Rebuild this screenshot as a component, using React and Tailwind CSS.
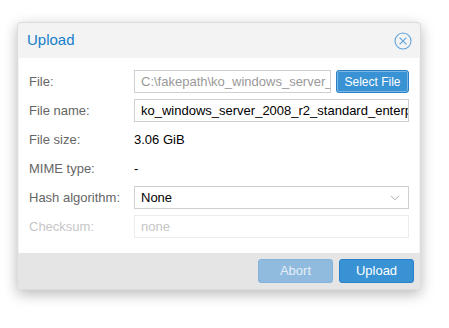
import React from 'react'

const font = { fontFamily: '"Liberation Sans", Arial, sans-serif' }

const Row = ({ label, disabled, children }) => (
  <div className="flex items-center h-[23px]">
    <div className={`w-[105px] shrink-0 text-[13px] ${disabled ? 'text-[#c6c6c6]' : 'text-[#666]'}`}>
      {label}
    </div>
    <div className="flex-1 flex items-center min-w-0">{children}</div>
  </div>
)

const CloseIcon = () => (
  <svg width="18" height="18" viewBox="0 0 18 18" fill="none" stroke="#5fa2dd" strokeWidth="1.1">
    <circle cx="9" cy="9" r="8" />
    <path d="M5.6 5.6 L12.4 12.4 M12.4 5.6 L5.6 12.4" />
  </svg>
)

const Chevron = () => (
  <svg width="10" height="6" viewBox="0 0 10 6" fill="none" stroke="#aaa" strokeWidth="1">
    <path d="M1 0.8 L5 4.8 L9 0.8" />
  </svg>
)

export default function App() {
  return (
    <div className="w-[449px] h-[328px] bg-white pt-[22px] pl-[17px]" style={font}>
      <div className="w-[404px] h-[268px] flex flex-col bg-[#f3f3f3] border border-[#dcdcdc] rounded-[4px] shadow-[0_4px_14px_rgba(0,0,0,0.28)] overflow-hidden">
        {/* Header */}
        <div className="h-[35px] shrink-0 flex items-center justify-between pl-[9px] pr-[8px]">
          <span className="text-[15px] text-[#157fcc]">Upload</span>
          <CloseIcon />
        </div>

        {/* Body */}
        <div className="flex-1 mx-[1px] bg-white pt-[12px] pl-[10px] pr-[10px] flex flex-col gap-[6px]">
          <Row label="File:">
            <div className="flex-1 h-[23px] border border-[#cfcfcf] px-[6px] flex items-center overflow-hidden whitespace-nowrap text-[13px] text-[#999]">
              C:\fakepath\ko_windows_server_
            </div>
            <button className="ml-[5px] w-[73px] h-[23px] shrink-0 bg-[#3892d4] border border-[#2a80c8] rounded-[3px] text-white text-[12px] shadow-[inset_0_0_0_1px_rgba(255,255,255,0.35)]">
              Select File
            </button>
          </Row>
          <Row label="File name:">
            <div className="flex-1 h-[23px] border border-[#cfcfcf] px-[6px] flex items-center overflow-hidden whitespace-nowrap text-[13px] text-black">
              ko_windows_server_2008_r2_standard_enterp
            </div>
          </Row>
          <Row label="File size:">
            <span className="text-[13px] text-black">3.06 GiB</span>
          </Row>
          <Row label="MIME type:">
            <span className="text-[13px] text-black">-</span>
          </Row>
          <Row label="Hash algorithm:">
            <div className="flex-1 h-[23px] border border-[#cfcfcf] pl-[6px] pr-[8px] flex items-center justify-between text-[13px] text-black">
              <span>None</span>
              <Chevron />
            </div>
          </Row>
          <Row label="Checksum:" disabled>
            <div className="flex-1 h-[23px] border border-[#ececec] px-[6px] flex items-center text-[13px] text-[#c6c6c6]">
              none
            </div>
          </Row>
        </div>

        {/* Footer */}
        <div className="h-[36px] shrink-0 bg-[#e5e5e5] flex items-center justify-end gap-[6px] pr-[6px]">
          <button className="w-[75px] h-[24px] bg-[#90bbdf] border border-[#83b3dc] rounded-[3px] text-[13px] text-[#e4eef8]">
            Abort
          </button>
          <button className="w-[75px] h-[24px] bg-[#3892d4] border border-[#2a80c8] rounded-[3px] text-[13px] text-white">
            Upload
          </button>
        </div>
      </div>
    </div>
  )
}
